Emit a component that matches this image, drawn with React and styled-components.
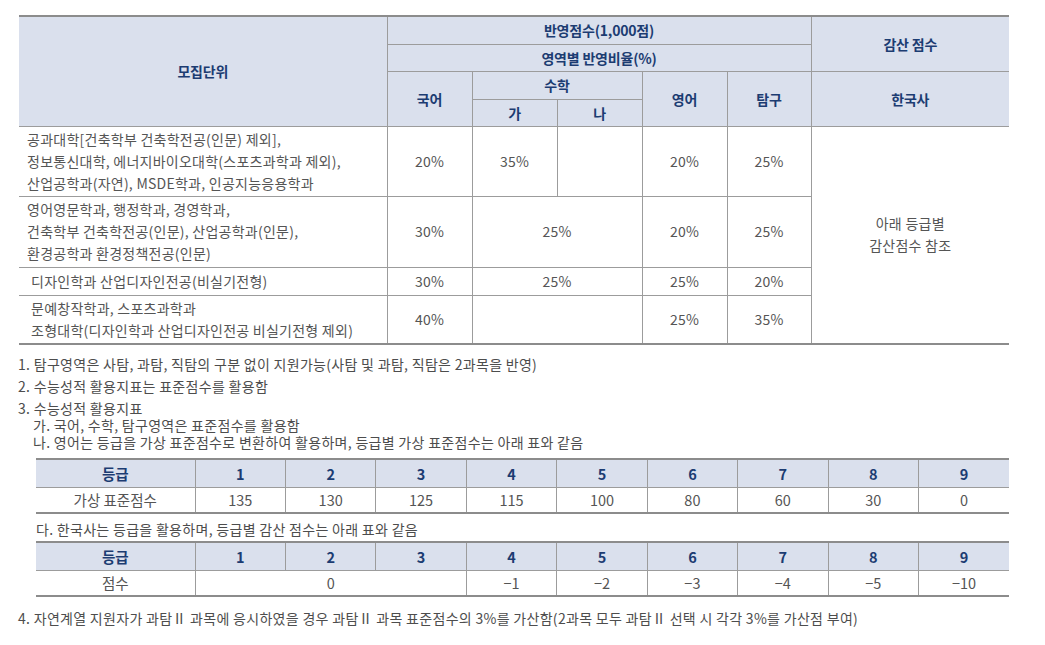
import React from 'react';
import styled, {createGlobalStyle} from 'styled-components';

const Global = createGlobalStyle`
    body {
        margin: 0;
        background: #fff;
    }
`;

const Page = styled.div`
    width: 1045px;
    box-sizing: border-box;
    padding: 15px 0 0 18px;
    font-family: "Noto Sans CJK KR", "Noto Sans", sans-serif;
    color: #555;
`;

const MainTable = styled.table`
    border-collapse: collapse;
    table-layout: fixed;
    width: 990px;
    margin-left: 1px;
    border-top: 2px solid #8c8c8c;
    border-bottom: 2px solid #8c8c8c;
    border-left: hidden;
    border-right: hidden;
`;

const Head = styled.th`
    background: #dae0ed;
    color: #1c3c72;
    font-weight: 700;
    font-size: 14px;
    letter-spacing: -0.2px;
    border: 1px solid #9c9c9c;
    padding: 0;
    height: ${p => p.$h || 27}px;
    box-sizing: border-box;
`;

const Cell = styled.td`
    border: 1px solid #9c9c9c;
    font-size: 14px;
    letter-spacing: 0.25px;
    line-height: 22px;
    color: #555;
    text-align: center;
    padding: 1px 4px 2px;
    height: ${p => p.$h}px;
    box-sizing: border-box;
`;

const NameCell = styled(Cell)`
    text-align: left;
    padding-left: ${p => (p.$indent ? 12 : 8)}px;
`;

const Notes = styled.div`
    margin-top: 11px;
    font-size: 14px;
    letter-spacing: 0.3px;
    color: #4d4d4d;
`;

const Note = styled.div`
    line-height: 17px;
    margin-bottom: 5px;
`;

const SubNote = styled.div`
    line-height: 17px;
    padding-left: ${p => p.$pad || 15}px;
    margin-top: ${p => p.$top || 0}px;
`;

const GradeTable = styled.table`
    border-collapse: collapse;
    table-layout: fixed;
    width: 973px;
    margin: ${p => p.$m || '7px 0 0 18px'};
    border-top: 2px solid #8c8c8c;
    border-bottom: 2px solid #8c8c8c;
    border-left: hidden;
    border-right: hidden;
    letter-spacing: 0;
`;

const GradeHead = styled.th`
    background: #dae0ed;
    color: #1c3c72;
    font-weight: 700;
    font-size: 14.5px;
    border: 1px solid #9c9c9c;
    padding: 0;
    height: 28px;
    box-sizing: border-box;
`;

const GradeCell = styled.td`
    border: 1px solid #9c9c9c;
    font-size: 14.5px;
    color: #555;
    text-align: center;
    padding: 0;
    height: 26px;
    box-sizing: border-box;
`;

const LastNote = styled.div`
    line-height: 17px;
    margin-top: 13px;
`;

const rows = [
    {
        name: ['공과대학[건축학부 건축학전공(인문) 제외],', '정보통신대학, 에너지바이오대학(스포츠과학과 제외),', '산업공학과(자연), MSDE학과, 인공지능응용학과'],
        h: 70, kor: '20%', ga: '35%', na: '', split: true, eng: '20%', tam: '25%'
    },
    {
        name: ['영어영문학과, 행정학과, 경영학과,', '건축학부 건축학전공(인문), 산업공학과(인문),', '환경공학과 환경정책전공(인문)'],
        h: 71, kor: '30%', math: '25%', eng: '20%', tam: '25%'
    },
    {name: ['디자인학과 산업디자인전공(비실기전형)'], h: 28, indent: true, kor: '30%', math: '25%', eng: '25%', tam: '20%'},
    {name: ['문예창작학과, 스포츠과학과', '조형대학(디자인학과 산업디자인전공 비실기전형 제외)'], h: 49, indent: true, kor: '40%', math: '', eng: '25%', tam: '35%'}
];

const grades = [1, 2, 3, 4, 5, 6, 7, 8, 9];
const english = [135, 130, 125, 115, 100, 80, 60, 30, 0];
const history = ['−1', '−2', '−3', '−4', '−5', '−10'];

function GradeCols() {
    return (
        <colgroup>
            <col style={{width: 159}}/>
            {grades.map(g => <col key={g}/>)}
        </colgroup>
    );
}

export default function App() {
    return (
        <Page>
            <Global/>
            <MainTable>
                <colgroup>
                    <col style={{width: 368}}/>
                    <col style={{width: 85}}/>
                    <col style={{width: 85}}/>
                    <col style={{width: 85}}/>
                    <col style={{width: 85}}/>
                    <col style={{width: 84}}/>
                    <col style={{width: 198}}/>
                </colgroup>
                <thead>
                <tr>
                    <Head rowSpan={4}>모집단위</Head>
                    <Head colSpan={5} $h={28}>반영점수(1,000점)</Head>
                    <Head rowSpan={2}>감산 점수</Head>
                </tr>
                <tr>
                    <Head colSpan={5}>영역별 반영비율(%)</Head>
                </tr>
                <tr>
                    <Head rowSpan={2}>국어</Head>
                    <Head colSpan={2} $h={28}>수학</Head>
                    <Head rowSpan={2}>영어</Head>
                    <Head rowSpan={2}>탐구</Head>
                    <Head rowSpan={2}>한국사</Head>
                </tr>
                <tr>
                    <Head>가</Head>
                    <Head>나</Head>
                </tr>
                </thead>
                <tbody>
                {rows.map((r, i) => (
                    <tr key={i}>
                        <NameCell $h={r.h} $indent={r.indent}>
                            {r.name.map((l, j) => <div key={j}>{l}</div>)}
                        </NameCell>
                        <Cell $h={r.h}>{r.kor}</Cell>
                        {r.split ? (
                            <>
                                <Cell $h={r.h}>{r.ga}</Cell>
                                <Cell $h={r.h}>{r.na}</Cell>
                            </>
                        ) : (
                            <Cell $h={r.h} colSpan={2}>{r.math}</Cell>
                        )}
                        <Cell $h={r.h}>{r.eng}</Cell>
                        <Cell $h={r.h}>{r.tam}</Cell>
                        {i === 0 && (
                            <Cell rowSpan={4}>아래 등급별<br/>감산점수 참조</Cell>
                        )}
                    </tr>
                ))}
                </tbody>
            </MainTable>

            <Notes>
                <Note>1. 탐구영역은 사탐, 과탐, 직탐의 구분 없이 지원가능(사탐 및 과탐, 직탐은 2과목을 반영)</Note>
                <Note>2. 수능성적 활용지표는 표준점수를 활용함</Note>
                <Note>
                    3. 수능성적 활용지표
                    <SubNote>가. 국어, 수학, 탐구영역은 표준점수를 활용함</SubNote>
                    <SubNote>나. 영어는 등급을 가상 표준점수로 변환하여 활용하며, 등급별 가상 표준점수는 아래 표와 같음</SubNote>
                    <GradeTable>
                        <GradeCols/>
                        <tbody>
                        <tr>
                            <GradeHead>등급</GradeHead>
                            {grades.map(g => <GradeHead key={g}>{g}</GradeHead>)}
                        </tr>
                        <tr>
                            <GradeCell>가상 표준점수</GradeCell>
                            {english.map((v, k) => <GradeCell key={k}>{v}</GradeCell>)}
                        </tr>
                        </tbody>
                    </GradeTable>
                    <SubNote $pad={18} $top={7}>다. 한국사는 등급을 활용하며, 등급별 감산 점수는 아래 표와 같음</SubNote>
                    <GradeTable $m="3px 0 0 18px">
                        <GradeCols/>
                        <tbody>
                        <tr>
                            <GradeHead>등급</GradeHead>
                            {grades.map(g => <GradeHead key={g}>{g}</GradeHead>)}
                        </tr>
                        <tr>
                            <GradeCell>점수</GradeCell>
                            <GradeCell colSpan={3}>0</GradeCell>
                            {history.map((v, k) => <GradeCell key={k}>{v}</GradeCell>)}
                        </tr>
                        </tbody>
                    </GradeTable>
                </Note>
                <LastNote>4. 자연계열 지원자가 과탐Ⅱ 과목에 응시하였을 경우 과탐Ⅱ 과목 표준점수의 3%를 가산함(2과목 모두 과탐Ⅱ 선택 시 각각 3%를 가산점 부여)</LastNote>
            </Notes>
        </Page>
    );
}
